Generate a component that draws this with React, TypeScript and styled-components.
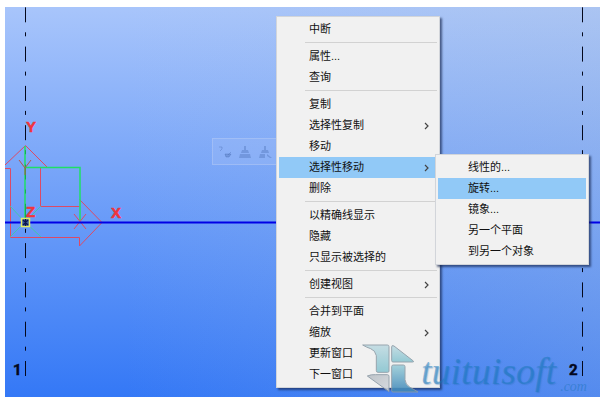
import React from "react";
import styled, { createGlobalStyle } from "styled-components";

const GlobalStyle = createGlobalStyle`
  * { box-sizing: border-box; }
  body { margin: 0; background: #fff; }
`;

const uiFont = `"Liberation Sans", "Noto Sans CJK SC", sans-serif`;

const Page = styled.main`
  display: grid;
  min-height: 100vh;
  padding: 7px 6px 3px 5px;
  font-family: ${uiFont};
`;

const Viewport = styled.section`
  position: relative;
  overflow: hidden;
  background:
    linear-gradient(to right, rgba(190, 200, 215, 0) 20%, rgba(180, 195, 215, 0.25)),
    linear-gradient(to bottom, #a8c5fb, #3478f6);
`;

const Drawing = styled.svg`
  position: absolute;
  inset: 0;
  width: 100%;
  height: 100%;
`;

const AxisLabel = styled.text`
  font: bold 15px "Liberation Sans", sans-serif;
  fill: #f0343c;
  stroke: #f0343c;
  stroke-width: 0.5px;
`;

const GridLabel = styled.text`
  font: bold 15px Roboto, sans-serif;
  fill: #04081c;
  stroke: #04081c;
  stroke-width: 0.5px;
`;

const GhostToolbar = styled.div`
  position: absolute;
  left: 207px;
  top: 131px;
  display: flex;
  align-items: center;
  gap: 6px;
  height: 27px;
  padding: 0 5px;
  border: 1px solid rgba(190, 208, 245, 0.4);
  background: rgba(160, 190, 245, 0.35);
`;

const GhostButton = styled.button`
  display: flex;
  padding: 0;
  border: 0;
  background: none;
  color: rgba(70, 105, 175, 0.35);
`;

const MenuPanel = styled.ul<{ $width: number }>`
  width: ${(p) => p.$width}px;
  margin: 0;
  padding: 2px;
  list-style: none;
  border: 1px solid #d2d5da;
  background: #f1f1f1;
  box-shadow: 2px 2px 2px rgba(20, 35, 75, 0.65);
`;

const MainMenu = styled(MenuPanel)`
  position: absolute;
  left: 271px;
  top: 9px;
`;

const SubMenu = styled(MenuPanel)`
  position: absolute;
  left: calc(100% - 2px);
  top: -3px;
`;

const MenuRow = styled.li`
  position: relative;
`;

const MenuButton = styled.button<{ $active?: boolean }>`
  display: flex;
  align-items: center;
  justify-content: space-between;
  width: 100%;
  height: 21px;
  padding: 0 8px 0 30px;
  border: 0;
  background: ${(p) => (p.$active ? "#91c9f7" : "transparent")};
  color: #101010;
  font: 11px/21px ${uiFont};
  text-align: left;
  white-space: nowrap;
`;

const Separator = styled.li`
  height: 6px;
  padding: 2px 0 3px 26px;

  &::before {
    content: "";
    display: block;
    height: 1px;
    background: #d2d2d2;
  }
`;

const Watermark = styled.div`
  position: absolute;
  left: 357px;
  top: 336px;
  display: flex;
  align-items: flex-end;
  pointer-events: none;
  white-space: nowrap;
`;

const WatermarkText = styled.span`
  color: rgba(24, 120, 185, 0.5);
  font: italic 38px/48px "Liberation Serif", serif;
  text-shadow: 1px 1px 1px rgba(40, 110, 180, 0.35);
`;

const WatermarkSuffix = styled.small`
  margin-left: 4px;
  color: rgba(28, 115, 185, 0.5);
  font: italic 14px/16px "Liberation Serif", serif;
`;

type Entry = { label: string; arrow?: boolean; children?: Entry[]; active?: boolean };

const groups: Entry[][] = [
  [{ label: "中断" }],
  [{ label: "属性..." }, { label: "查询" }],
  [
    { label: "复制" },
    { label: "选择性复制", arrow: true },
    { label: "移动" },
    {
      label: "选择性移动",
      arrow: true,
      active: true,
      children: [
        { label: "线性的..." },
        { label: "旋转...", active: true },
        { label: "镜象..." },
        { label: "另一个平面" },
        { label: "到另一个对象" },
      ],
    },
    { label: "删除" },
  ],
  [{ label: "以精确线显示" }, { label: "隐藏" }, { label: "只显示被选择的" }],
  [{ label: "创建视图", arrow: true }],
  [{ label: "合并到平面" }, { label: "缩放", arrow: true }, { label: "更新窗口" }, { label: "下一窗口" }],
];

function Chevron() {
  return (
    <svg width="5" height="8" viewBox="0 0 5 8" aria-hidden="true">
      <path d="M1 1l3 3-3 3" fill="none" stroke="#444" strokeWidth="1.2" />
    </svg>
  );
}

function MenuEntry({ entry }: { entry: Entry }) {
  return (
    <MenuRow role="none">
      <MenuButton type="button" role="menuitem" $active={entry.active} aria-haspopup={entry.arrow ? "menu" : undefined}>
        {entry.label}
        {entry.arrow && <Chevron />}
      </MenuButton>
      {entry.children && (
        <SubMenu role="menu" aria-label={entry.label} $width={154}>
          {entry.children.map((child) => (
            <MenuEntry key={child.label} entry={child} />
          ))}
        </SubMenu>
      )}
    </MenuRow>
  );
}

function ModelDrawing() {
  return (
    <Drawing viewBox="5 7 595 390" preserveAspectRatio="xMidYMid slice">
      <g stroke="#04081c" strokeWidth="1" strokeDasharray="15 10 4 10.3">
        <path d="M25.5 7.3V377" />
        <path d="M582.5 7.3V377" />
      </g>
      <g fill="none" stroke="#dc4a66" strokeWidth="1">
        <path d="M5 165L25.5 145.5L47 167" />
        <path d="M5 168.5H10.5V237.5H79.5V246L102 222.5L79.5 199.5" />
        <path d="M40.5 168V206.5H79.5" />
        <path d="M74 214L86 229M86 214L74 229" />
      </g>
      <path d="M10 206L25 222L10 237M41 206L25 222L41 237" fill="none" stroke="#3ccf98" strokeWidth="1" opacity="0.8" />
      <path d="M25 146V222M25 167.5H80V220" fill="none" stroke="#1fdf66" strokeWidth="1.5" />
      <path d="M19 160L25 168L31 160M25 168V175" fill="none" stroke="#b0584a" strokeWidth="1" />
      <path d="M5 222.5H600" stroke="#0000e6" strokeWidth="2" />
      <rect x="21.5" y="218.5" width="8" height="8" fill="#3b5f9c" stroke="#e6ea62" strokeWidth="1.5" />
      <path d="M23 220L28 225M28 220L23 225M25.5 219V226" stroke="#0a1450" strokeWidth="1.2" />
      <AxisLabel x="26" y="132">Y</AxisLabel>
      <AxisLabel x="26" y="217">Z</AxisLabel>
      <AxisLabel x="111" y="218">X</AxisLabel>
      <GridLabel x="13" y="375">1</GridLabel>
      <GridLabel x="569" y="375">2</GridLabel>
    </Drawing>
  );
}

function FaintTools() {
  return (
    <GhostToolbar>
      <GhostButton type="button" aria-label="Query">
        <svg width="14" height="14" viewBox="0 0 14 14" fill="none" stroke="currentColor">
          <path d="M1 2h3v2L2 6" />
          <path d="M7 9h6l-2 3H8z" fill="currentColor" />
          <path d="M10 10l3-3" />
        </svg>
      </GhostButton>
      <GhostButton type="button" aria-label="Clean">
        <svg width="14" height="14" viewBox="0 0 14 14" fill="currentColor">
          <path d="M6 1h2v4h2l1 3H3l1-3h2zM2 9h10l1 4H1z" />
        </svg>
      </GhostButton>
      <GhostButton type="button" aria-label="Clean selected">
        <svg width="14" height="14" viewBox="0 0 14 14" fill="currentColor">
          <path d="M6 1h2v4h2l1 3H3l1-3h2zM2 9h5v4H1zM9 9l5 4h-2l-3-2z" />
        </svg>
      </GhostButton>
    </GhostToolbar>
  );
}

function WatermarkLogo() {
  return (
    <svg width="59" height="52" viewBox="0 0 177 156" aria-hidden="true">
      <defs>
        <linearGradient id="teal" x1="0" y1="0" x2="0" y2="1">
          <stop offset="0" stopColor="#c0dbe2" />
          <stop offset="1" stopColor="#86c4d0" />
        </linearGradient>
        <linearGradient id="deep" x1="0" y1="0" x2="0" y2="1">
          <stop offset="0" stopColor="#9acdd8" />
          <stop offset="1" stopColor="#3c86b8" />
        </linearGradient>
        <linearGradient id="grey" x1="0" y1="0" x2="1" y2="1">
          <stop offset="0" stopColor="#b8bec4" />
          <stop offset="1" stopColor="#d3d8dd" />
        </linearGradient>
      </defs>
      <g stroke="#8b9aa5" strokeWidth="3" strokeLinejoin="round" opacity="0.88">
        <path d="M2 6H76Q81 6 81 11V84Q81 88 77 88H48Q43 88 43 83V38Q40 22 26 17Q14 13 2 6Z" fill="url(#teal)" />
        <path d="M89 12Q89 5 96 9L154 54Q156 57 152 57H93Q89 57 89 53Z" fill="url(#teal)" />
        <path d="M16 99Q28 94 40 95H76Q81 95 81 100V146Z" fill="url(#grey)" />
        <path d="M89 71Q89 66 94 66H124Q129 66 129 71V110Q130 124 143 132L168 147H93Q89 147 89 143Z" fill="url(#deep)" />
      </g>
    </svg>
  );
}

export default function App() {
  return (
    <>
      <GlobalStyle />
      <Page>
        <Viewport>
          <ModelDrawing />
          <FaintTools />
          <MainMenu role="menu" $width={164}>
            {groups.map((group, index) => (
              <React.Fragment key={group[0].label}>
                {index > 0 && <Separator role="separator" />}
                {group.map((entry) => (
                  <MenuEntry key={entry.label} entry={entry} />
                ))}
              </React.Fragment>
            ))}
          </MainMenu>
          <Watermark>
            <WatermarkLogo />
            <WatermarkText>tuituisoft</WatermarkText>
            <WatermarkSuffix>.com</WatermarkSuffix>
          </Watermark>
        </Viewport>
      </Page>
    </>
  );
}
